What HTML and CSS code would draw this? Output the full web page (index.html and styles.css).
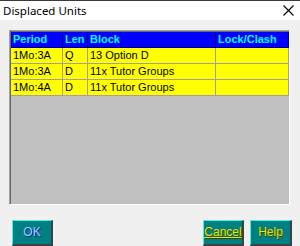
FILE: index.html
```html
<!DOCTYPE html>
<html>
<head>
<meta charset="utf-8">
<link rel="stylesheet" href="styles.css">
</head>
<body>
<div class="window">
  <div class="titlebar">
    <span class="title">Displaced Units</span>
    <svg class="close" width="11" height="11" viewBox="0 0 11 11"><path d="M0.5 0.5 L10.5 10.5 M10.5 0.5 L0.5 10.5" stroke="#000" stroke-width="1.1" fill="none"/></svg>
  </div>
  <div class="content">
    <div class="grid">
      <div class="row head">
        <div class="c c1">Period</div>
        <div class="c c2">Len</div>
        <div class="c c3">Block</div>
        <div class="c c4">Lock/Clash</div>
      </div>
      <div class="row data">
        <div class="c c1">1Mo:3A</div>
        <div class="c c2">Q</div>
        <div class="c c3">13 Option D</div>
        <div class="c c4"></div>
      </div>
      <div class="row data">
        <div class="c c1">1Mo:3A</div>
        <div class="c c2">D</div>
        <div class="c c3">11x Tutor Groups</div>
        <div class="c c4"></div>
      </div>
      <div class="row data">
        <div class="c c1">1Mo:4A</div>
        <div class="c c2">D</div>
        <div class="c c3">11x Tutor Groups</div>
        <div class="c c4"></div>
      </div>
    </div>
    <div class="buttons">
      <div class="btn ok">OK</div>
      <div class="spacer"></div>
      <div class="btn cancel"><u>Cancel</u></div>
      <div class="btn help">Help</div>
    </div>
  </div>
</div>
</body>
</html>
```

FILE: styles.css
```css
html, body {
  margin: 0;
  padding: 0;
  width: 300px;
  height: 246px;
  overflow: hidden;
  background: #f0f0f0;
}
.window {
  display: flex;
  flex-direction: column;
  width: 300px;
  height: 246px;
}
.titlebar {
  height: 22px;
  background: #ffffff;
  border-top: 1px solid #3a3a3a;
  box-sizing: border-box;
  display: flex;
  align-items: center;
  padding-left: 3px;
  padding-right: 6px;
}
.title {
  font-family: "Noto Sans", "Open Sans", sans-serif;
  font-size: 11.5px;
  color: #000;
  flex: 1;
  margin-top: -1px;
}
.close {
  display: block;
}
.content {
  flex: 1;
  padding: 10px 9px 0 9px;
  display: flex;
  flex-direction: column;
}
.grid {
  height: 175px;
  box-sizing: border-box;
  width: 281px;
  background: #c0c0c0;
  border-top: 1px solid #a0a0a0;
  border-left: 1px solid #a0a0a0;
  border-right: 1px solid #ffffff;
  border-bottom: 1px solid #ffffff;
  box-shadow: inset 1px 1px 0 #696969;
  padding: 1px 0 0 1px;
}
.row {
  display: grid;
  grid-template-columns: 52px 25px 128px 73px;
  height: 16px;
  box-sizing: border-box;
  font-family: "Liberation Sans", Arial, sans-serif;
  font-size: 11px;
}
.head {
  background: #0000ff;
  color: #00ffff;
  font-weight: bold;
  border-bottom: 1px solid #000080;
}
.head .c {
  border-right: 1px solid #000080;
}
.data {
  background: #ffff00;
  color: #000;
  border-bottom: 1px solid #a0a0a0;
}
.data .c {
  border-right: 1px solid #a0a0a0;
}
.c {
  padding-left: 2px;
  line-height: 15px;
  white-space: nowrap;
  overflow: hidden;
}
.buttons {
  display: flex;
  margin-top: 15px;
  padding-left: 3px;
  margin-right: -1px;
}
.spacer { flex: 1; }
.btn {
  height: 26px;
  box-sizing: border-box;
  background: #008080;
  border-top: 1px solid #40f0f0;
  border-left: 1px solid #40f0f0;
  border-right: 2px solid #404040;
  border-bottom: 2px solid #404040;
  font-family: "Liberation Sans", Arial, sans-serif;
  font-size: 12px;
  display: flex;
  align-items: center;
  justify-content: center;
  padding-bottom: 1px;
}
.ok {
  width: 41px;
  color: #a8c8ff;
  text-shadow: 1px 1px 0 #1020a0;
}
.cancel {
  width: 41px;
  color: #e8e800;
  text-shadow: 1px 1px 0 #404000;
}
.help {
  width: 42px;
  margin-left: 6px;
  color: #e8e800;
  text-shadow: 1px 1px 0 #404000;
}
```
